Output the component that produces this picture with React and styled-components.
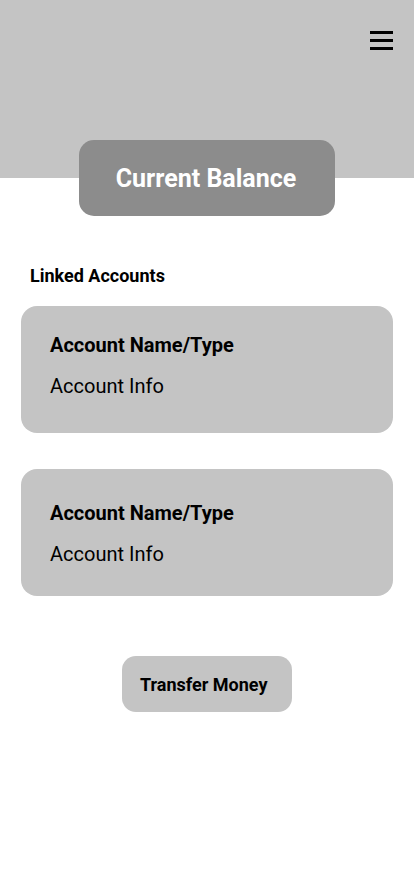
import React from "react";
import styled, { createGlobalStyle } from "styled-components";

const Global = createGlobalStyle`
  html, body { margin: 0; padding: 0; background: #ffffff; }
  body { font-family: Roboto, "Liberation Sans", sans-serif; }
  * { box-sizing: border-box; }
`;

const Page = styled.div`
  width: 414px;
  min-height: 896px;
  background: #ffffff;
  display: flex;
  flex-direction: column;
`;

const Header = styled.header`
  height: 178px;
  background: #c4c4c4;
  display: flex;
  justify-content: flex-end;
  align-items: flex-start;
  padding: 31px 21px 0 0;
`;

const MenuButton = styled.button`
  width: 23px;
  height: 19px;
  padding: 0;
  border: none;
  background: transparent;
  display: flex;
  flex-direction: column;
  justify-content: space-between;
  cursor: pointer;
`;

const MenuBar = styled.span`
  display: block;
  width: 23px;
  height: 3px;
  background: #000000;
`;

const BalanceCard = styled.div`
  align-self: center;
  margin-top: -38px;
  width: 256px;
  height: 76px;
  border-radius: 15px;
  background: #8c8c8c;
  color: #ffffff;
  font-size: 25px;
  font-weight: 700;
  line-height: 30px;
  padding: 2px 2px 0 0;
  display: flex;
  align-items: center;
  justify-content: center;
`;

const SectionTitle = styled.h2`
  margin: 50px 0 0 30px;
  font-size: 18px;
  font-weight: 700;
  color: #000000;
  line-height: 20px;
`;

const AccountList = styled.div`
  display: flex;
  flex-direction: column;
  gap: 36px;
  padding: 0 21px;
  margin-top: 20px;
`;

const AccountCard = styled.div`
  height: 127px;
  border-radius: 16px;
  background: #c4c4c4;
  padding: ${(p) => p.$padTop}px 29px 0;
  display: flex;
  flex-direction: column;
  gap: 17px;
`;

const AccountName = styled.div`
  font-size: 20px;
  font-weight: 700;
  color: #000000;
  line-height: 24px;
`;

const AccountInfo = styled.div`
  font-size: 20px;
  font-weight: 400;
  color: #000000;
  line-height: 24px;
`;

const TransferButton = styled.button`
  align-self: center;
  margin-top: 60px;
  width: 170px;
  height: 56px;
  border: none;
  border-radius: 14px;
  background: #c4c4c4;
  color: #000000;
  font-family: Roboto, "Liberation Sans", sans-serif;
  font-size: 18px;
  font-weight: 700;
  padding: 0 20px 0 18px;
  text-align: left;
  cursor: pointer;
`;

const accounts = [
  { name: "Account Name/Type", info: "Account Info", padTop: 27 },
  { name: "Account Name/Type", info: "Account Info", padTop: 32 },
];

export default function App() {
  return (
    <>
      <Global />
      <Page>
        <Header>
          <MenuButton aria-label="Menu">
            <MenuBar />
            <MenuBar />
            <MenuBar />
          </MenuButton>
        </Header>
        <BalanceCard>Current Balance</BalanceCard>
        <SectionTitle>Linked Accounts</SectionTitle>
        <AccountList>
          {accounts.map((a, i) => (
            <AccountCard key={i} $padTop={a.padTop}>
              <AccountName>{a.name}</AccountName>
              <AccountInfo>{a.info}</AccountInfo>
            </AccountCard>
          ))}
        </AccountList>
        <TransferButton>Transfer Money</TransferButton>
      </Page>
    </>
  );
}
